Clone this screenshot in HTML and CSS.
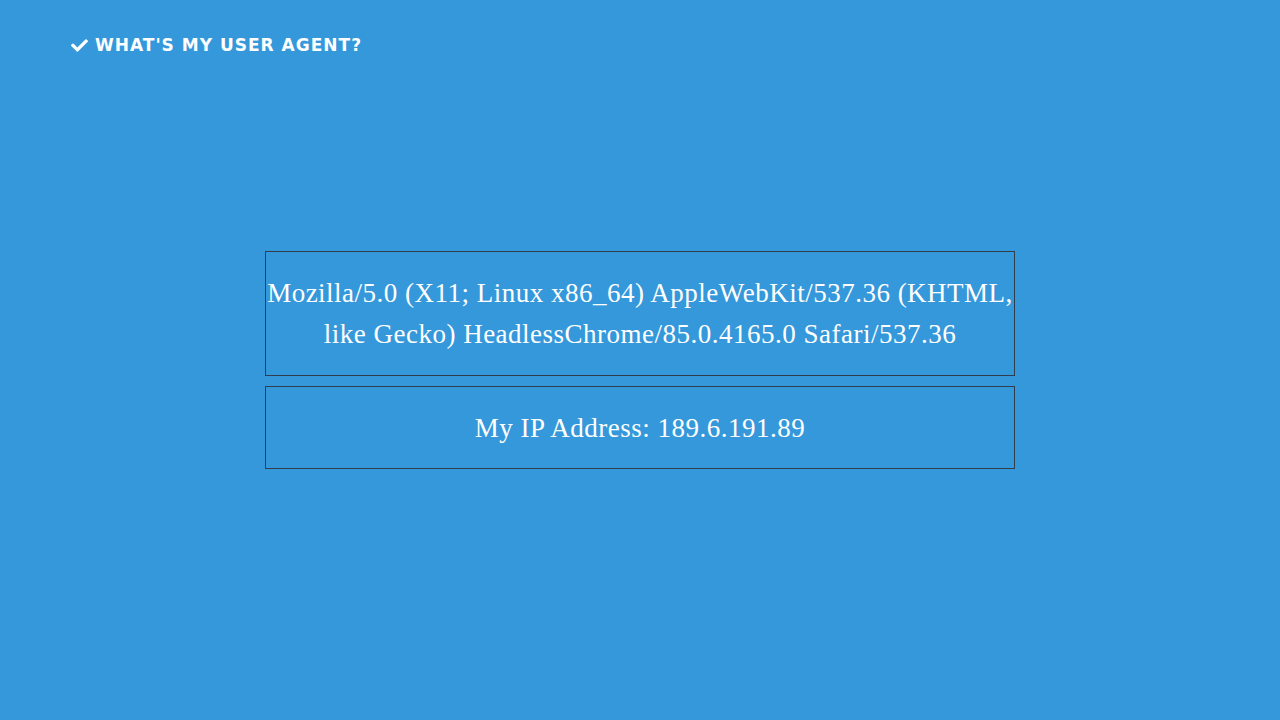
FILE: index.html
```html
<!DOCTYPE html>
<html lang="en">
<head>
<meta charset="utf-8">
<title>What's my user agent?</title>
<link rel="stylesheet" href="styles.css">
</head>
<body>
<div class="page">
  <header class="top">
    <a class="brand" href="#">
      <svg class="check" viewBox="0 0 512 512" width="17" height="17" aria-hidden="true"><path fill="#fff" d="M173.9 439.4l-166.4-166.4c-10-10-10-26.2 0-36.2l36.2-36.2c10-10 26.2-10 36.2 0L192 312.7 432.1 72.6c10-10 26.2-10 36.2 0l36.2 36.2c10 10 10 26.2 0 36.2L210.1 439.4c-10 10-26.2 10-36.2 0z"/></svg>
      <span>WHAT'S MY USER AGENT?</span>
    </a>
  </header>
  <main class="content">
    <div class="box">Mozilla/5.0 (X11; Linux x86_64) AppleWebKit/537.36 (KHTML, like Gecko) HeadlessChrome/85.0.4165.0 Safari/537.36</div>
    <div class="box">My IP Address: 189.6.191.89</div>
  </main>
  <div class="spacer"></div>
</div>
</body>
</html>
```
FILE: styles.css
```css
html, body {
  margin: 0;
  padding: 0;
}
body {
  background: #3598db;
  color: #fff;
}
.page {
  min-height: 100vh;
  display: grid;
  grid-template-rows: 1fr auto 1fr;
}
.top {
  padding: 33px 0 0 71px;
}
.brand {
  display: inline-flex;
  align-items: center;
  gap: 7px;
  color: #fff;
  text-decoration: none;
  font-family: "DejaVu Sans", sans-serif;
  font-weight: bold;
  font-size: 17px;
  letter-spacing: 1px;
  line-height: 24px;
}
.content {
  width: 750px;
  margin: 0 auto;
  display: flex;
  flex-direction: column;
  gap: 10px;
}
.box {
  border: 1px solid #2f3e4c;
  padding: 21px 0 19px;
  text-align: center;
  font-family: "Liberation Serif", serif;
  font-size: 27px;
  letter-spacing: 0.5px;
  line-height: 41.5px;
}
```
